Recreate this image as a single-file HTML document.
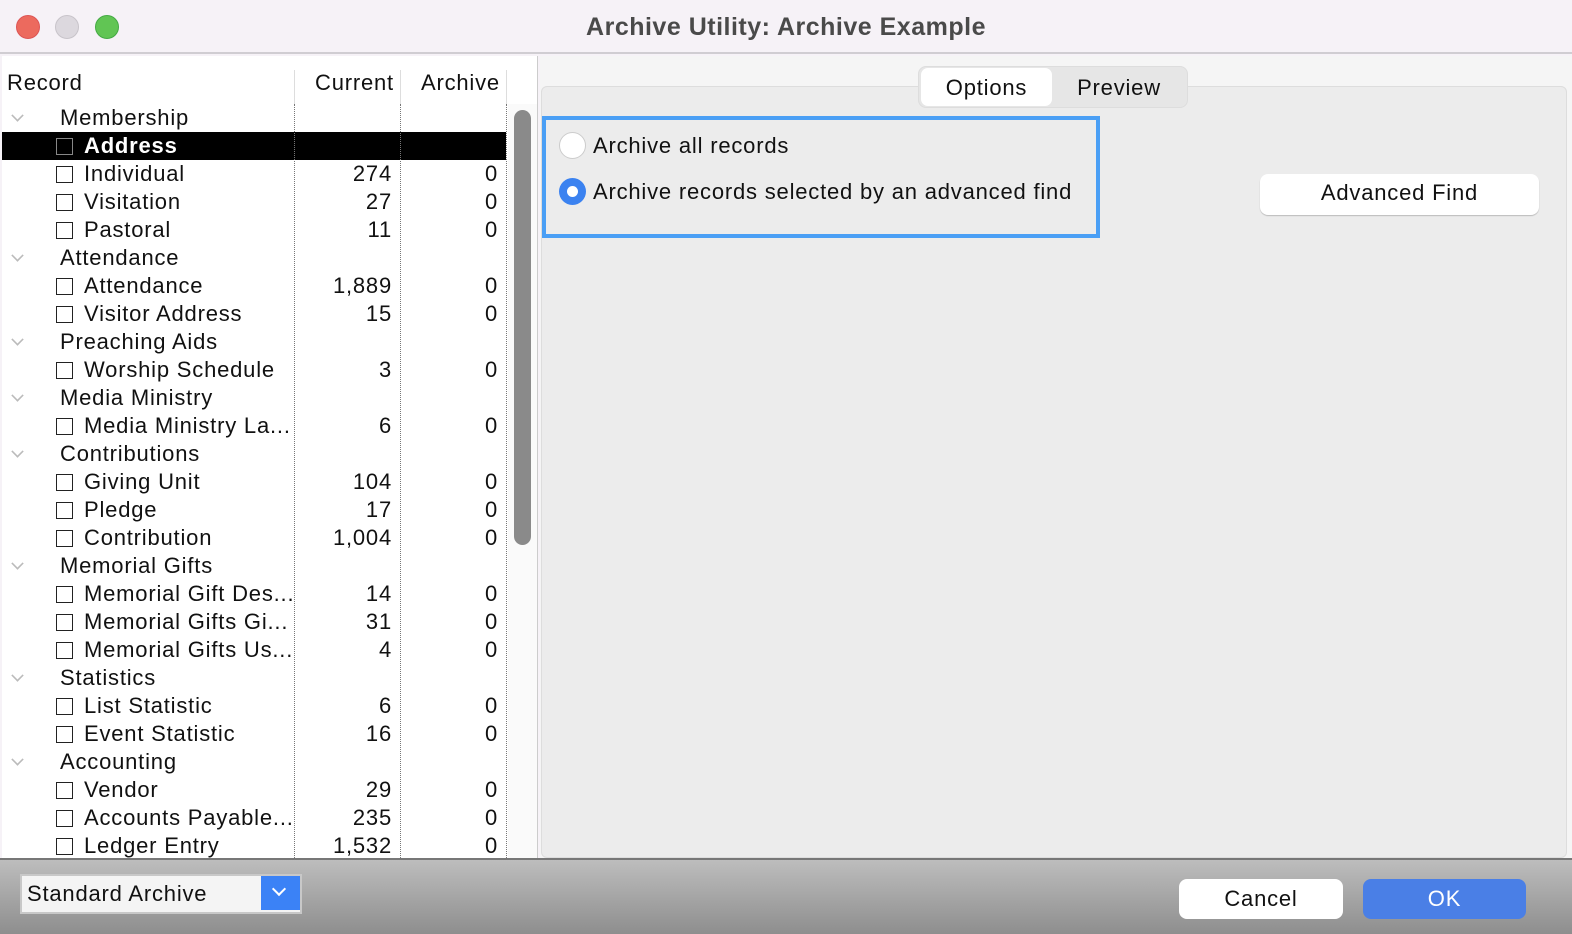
<!DOCTYPE html>
<html><head><style>
*{margin:0;padding:0;box-sizing:border-box}
body{width:1572px;height:934px;overflow:hidden;font-family:"Liberation Sans",sans-serif;background:#f6f2f7;position:relative;color:#111;letter-spacing:0.8px}
.abs{position:absolute}
.title{left:0;top:0;width:1572px;height:54px;background:#f6f2f7;border-bottom:2px solid #d0cdd2;text-align:center;font-size:25px;font-weight:bold;color:#4a4a4a;line-height:54px;letter-spacing:0.5px}
.dot{top:15px;width:24px;height:24px;border-radius:50%}
.left{left:2px;top:56px;width:536px;height:802px;background:#fff;border-right:1px solid #ccc;overflow:hidden}
.hdr{position:absolute;top:14px;font-size:22px}
.row{position:absolute;left:0;width:504px;height:28px;font-size:22px;line-height:28px}
.row .n{position:absolute;left:82px}
.row .g{position:absolute;left:58px}
.row .c{position:absolute;right:114px}
.row .a{position:absolute;right:8px}
.cb{position:absolute;left:54px;top:6px;width:17px;height:17px;border:1.5px solid #222}
.chev{position:absolute;left:10px;top:6px;width:11px;height:11px;border-right:2px solid #bbb;border-bottom:2px solid #bbb;transform:rotate(45deg) scale(.8,.8)}
.vl{position:absolute;top:48px;height:760px;border-left:1.5px dotted #777}
.right{left:540px;top:56px;width:1032px;height:802px;background:#f5f5f5}
.box{left:541px;top:86px;width:1026px;height:772px;background:#ececec;border:1px solid #ddd;border-radius:6px}
.bottom{left:0;top:858px;width:1572px;height:76px;background:linear-gradient(#bdbdbd,#8e8e8e);border-top:2px solid #777}
</style></head><body>
<div class="abs title">Archive Utility: Archive Example</div>
<div class="abs dot" style="left:16px;background:#ec6a5e;border:1px solid #d55"></div>
<div class="abs dot" style="left:55px;background:#dcd8de;border:1px solid #c8c4ca"></div>
<div class="abs dot" style="left:95px;background:#61c554;border:1px solid #4a4"></div>

<div class="abs left">
<div class="hdr" style="left:5px">Record</div>
<div class="hdr" style="left:313px">Current</div>
<div class="hdr" style="left:419px">Archive</div>
<div style="position:absolute;left:292px;top:14px;height:34px;border-left:1px solid #ddd"></div>
<div style="position:absolute;left:398px;top:14px;height:34px;border-left:1px solid #ddd"></div>
<div style="position:absolute;left:504px;top:14px;height:34px;border-left:1px solid #ddd"></div>
<div class="row" style="top:48px"><span class="chev"></span><span class="g">Membership</span></div>
<div class="row" style="top:76px;background:#000;color:#fff;font-weight:bold"><span class="cb" style="border-color:#888"></span><span class="n">Address</span></div>
<div class="row" style="top:104px"><span class="cb"></span><span class="n">Individual</span><span class="c">274</span><span class="a">0</span></div>
<div class="row" style="top:132px"><span class="cb"></span><span class="n">Visitation</span><span class="c">27</span><span class="a">0</span></div>
<div class="row" style="top:160px"><span class="cb"></span><span class="n">Pastoral</span><span class="c">11</span><span class="a">0</span></div>
<div class="row" style="top:188px"><span class="chev"></span><span class="g">Attendance</span></div>
<div class="row" style="top:216px"><span class="cb"></span><span class="n">Attendance</span><span class="c">1,889</span><span class="a">0</span></div>
<div class="row" style="top:244px"><span class="cb"></span><span class="n">Visitor Address</span><span class="c">15</span><span class="a">0</span></div>
<div class="row" style="top:272px"><span class="chev"></span><span class="g">Preaching Aids</span></div>
<div class="row" style="top:300px"><span class="cb"></span><span class="n">Worship Schedule</span><span class="c">3</span><span class="a">0</span></div>
<div class="row" style="top:328px"><span class="chev"></span><span class="g">Media Ministry</span></div>
<div class="row" style="top:356px"><span class="cb"></span><span class="n">Media Ministry La...</span><span class="c">6</span><span class="a">0</span></div>
<div class="row" style="top:384px"><span class="chev"></span><span class="g">Contributions</span></div>
<div class="row" style="top:412px"><span class="cb"></span><span class="n">Giving Unit</span><span class="c">104</span><span class="a">0</span></div>
<div class="row" style="top:440px"><span class="cb"></span><span class="n">Pledge</span><span class="c">17</span><span class="a">0</span></div>
<div class="row" style="top:468px"><span class="cb"></span><span class="n">Contribution</span><span class="c">1,004</span><span class="a">0</span></div>
<div class="row" style="top:496px"><span class="chev"></span><span class="g">Memorial Gifts</span></div>
<div class="row" style="top:524px"><span class="cb"></span><span class="n">Memorial Gift Des...</span><span class="c">14</span><span class="a">0</span></div>
<div class="row" style="top:552px"><span class="cb"></span><span class="n">Memorial Gifts Gi...</span><span class="c">31</span><span class="a">0</span></div>
<div class="row" style="top:580px"><span class="cb"></span><span class="n">Memorial Gifts Us...</span><span class="c">4</span><span class="a">0</span></div>
<div class="row" style="top:608px"><span class="chev"></span><span class="g">Statistics</span></div>
<div class="row" style="top:636px"><span class="cb"></span><span class="n">List Statistic</span><span class="c">6</span><span class="a">0</span></div>
<div class="row" style="top:664px"><span class="cb"></span><span class="n">Event Statistic</span><span class="c">16</span><span class="a">0</span></div>
<div class="row" style="top:692px"><span class="chev"></span><span class="g">Accounting</span></div>
<div class="row" style="top:720px"><span class="cb"></span><span class="n">Vendor</span><span class="c">29</span><span class="a">0</span></div>
<div class="row" style="top:748px"><span class="cb"></span><span class="n">Accounts Payable...</span><span class="c">235</span><span class="a">0</span></div>
<div class="row" style="top:776px"><span class="cb"></span><span class="n">Ledger Entry</span><span class="c">1,532</span><span class="a">0</span></div>
<div class="vl" style="left:292px"></div>
<div class="vl" style="left:398px"></div>
<div class="vl" style="left:504px"></div>
<div style="position:absolute;left:506px;top:48px;width:30px;height:760px;background:#fafafa"></div>
<div style="position:absolute;left:512px;top:54px;width:17px;height:435px;border-radius:9px;background:#8a8a8a"></div>
</div>

<div class="abs right"></div>
<div class="abs box"></div>
<div class="abs" style="left:918px;top:66px;width:270px;height:42px;background:#e6e6e6;border:1px solid #ddd;border-radius:8px"></div>
<div class="abs" style="left:921px;top:68px;width:131px;height:38px;background:#fff;border-radius:7px;text-align:center;line-height:40px;font-size:22px">Options</div>
<div class="abs" style="left:1052px;top:68px;width:134px;height:38px;text-align:center;line-height:40px;font-size:22px">Preview</div>

<div class="abs" style="left:542px;top:116px;width:558px;height:122px;border:4px solid #4a9ff5"></div>
<div class="abs" style="left:559px;top:132px;width:27px;height:27px;border-radius:50%;background:#fff;border:1px solid #ccc"></div>
<div class="abs" style="left:593px;top:132px;font-size:22px;line-height:28px">Archive all records</div>
<div class="abs" style="left:559px;top:178px;width:27px;height:27px;border-radius:50%;background:#3b82f0"></div>
<div class="abs" style="left:567px;top:186px;width:11px;height:11px;border-radius:50%;background:#fff"></div>
<div class="abs" style="left:593px;top:178px;font-size:22px;line-height:28px">Archive records selected by an advanced find</div>
<div class="abs" style="left:1260px;top:174px;width:279px;height:41px;background:#fff;border-radius:8px;box-shadow:0 1px 1px #bbb;text-align:center;line-height:38px;font-size:22px">Advanced Find</div>

<div class="abs bottom"></div>
<div class="abs" style="left:20px;top:874px;width:282px;height:40px;background:#f4f4f4;border:2px solid #c8c8c8;font-size:22px;line-height:36px;padding-left:5px">Standard Archive</div>
<div class="abs" style="left:261px;top:876px;width:39px;height:34px;background:#3b82f6"></div>
<div class="abs" style="left:274px;top:884px;width:10px;height:10px;border-right:2px solid #fff;border-bottom:2px solid #fff;transform:rotate(45deg)"></div>
<div class="abs" style="left:1179px;top:879px;width:164px;height:40px;background:#fff;border-radius:8px;text-align:center;line-height:40px;font-size:22px">Cancel</div>
<div class="abs" style="left:1363px;top:879px;width:163px;height:40px;background:#4a7fe6;border-radius:8px;text-align:center;line-height:40px;font-size:22px;color:#fff">OK</div>
</body></html>
